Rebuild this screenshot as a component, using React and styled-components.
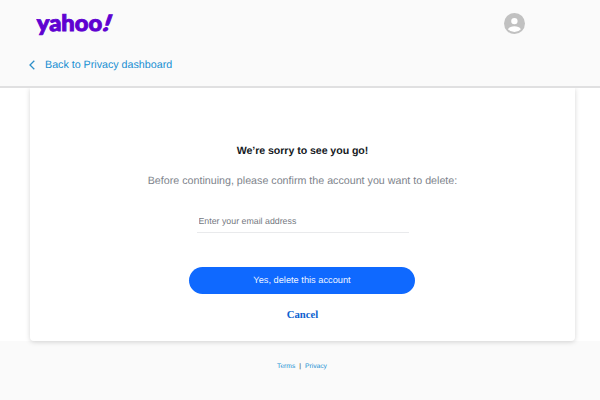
import React from "react";
import styled, { createGlobalStyle } from "styled-components";

const GlobalStyle = createGlobalStyle`
  * { box-sizing: border-box; }
  body {
    margin: 0;
    background: #fafafa;
    font-family: "Liberation Sans", Arial, sans-serif;
    text-rendering: geometricPrecision;
  }
`;

const Page = styled.div`
  display: flex;
  flex-direction: column;
  height: 400px;
  overflow: hidden;
`;

const Header = styled.header`
  height: 86px;
  flex: none;
`;

const TopBar = styled.div`
  display: flex;
  justify-content: space-between;
  align-items: center;
  height: 47px;
  padding: 0 75px 0 36px;
`;

const Logo = styled.svg`
  display: block;
  width: 84px;
  height: 44px;
  fill: #5f01d1;
  stroke: #5f01d1;
  stroke-width: 0.9;
  font-family: Lato, sans-serif;
  font-weight: 900;
`;

const Avatar = styled.svg`
  display: block;
  width: 21px;
  height: 21px;
`;

const BackLink = styled.a`
  display: flex;
  align-items: center;
  gap: 10px;
  height: 36px;
  padding-left: 29px;
  color: #188fd2;
  font-size: 10.7px;
  white-space: nowrap;
`;

const Chevron = styled.svg`
  display: block;
  width: 6px;
  height: 10px;
  fill: none;
  stroke: #2d8fc9;
  stroke-width: 1.3;
`;

const Main = styled.main`
  flex: none;
  height: 255px;
  padding: 0 25px 0 30px;
  background: #fff;
  border-top: 2px solid #e0e0e1;
`;

const Card = styled.section`
  display: flex;
  flex-direction: column;
  align-items: center;
  height: 253px;
  padding-top: 56px;
  background: #fff;
  border-radius: 0 0 4px 4px;
  box-shadow: 0 1px 5px rgba(0, 0, 0, 0.17);
  clip-path: inset(0 -8px -8px -8px);
`;

const Title = styled.h1`
  margin: 0;
  height: 14px;
  color: #15191e;
  font-size: 10.6px;
  letter-spacing: -0.05px;
  line-height: 14px;
`;

const Prompt = styled.p`
  margin: 16px 0 0;
  height: 15px;
  color: #7e848c;
  font-size: 10.7px;
  line-height: 15px;
  white-space: nowrap;
`;

const EmailInput = styled.input`
  width: 212px;
  height: 24px;
  margin-top: 20px;
  padding: 0 2px;
  border: 0;
  border-bottom: 1px solid #e9eaec;
  background: transparent;
  font: 8.8px "Liberation Sans", Arial, sans-serif;
  text-rendering: geometricPrecision;
  outline: none;
  &::placeholder {
    color: #75797f;
    opacity: 1;
  }
`;

const DeleteButton = styled.button`
  width: 226px;
  height: 27px;
  margin: 34px 1px 0 0;
  padding: 0 0 1px;
  border: 0;
  border-radius: 14px;
  background: #0f69ff;
  color: #eef4ff;
  font: 9.25px "Liberation Sans", Arial, sans-serif;
  text-rendering: geometricPrecision;
`;

const Cancel = styled.a`
  margin-top: 14px;
  color: #0c62d0;
  font: bold 10.7px/14px "Liberation Serif", "Times New Roman", serif;
`;

const Footer = styled.footer`
  display: flex;
  justify-content: center;
  gap: 4px;
  padding: 21px 0 0 4px;
  color: #333;
  font-size: 6.7px;
  line-height: 10px;
`;

const FooterLink = styled.a`
  color: #188fd2;
`;

export default function App() {
  return (
    <>
      <GlobalStyle />
      <Page>
        <Header>
          <TopBar>
            <Logo viewBox="0 0 84 44" aria-label="yahoo!">
              <text x="0.8" y="28.6" fontSize="22.5" textLength="65.5" lengthAdjust="spacingAndGlyphs">yahoo</text>
              <text transform="translate(65.300 28.600) skewX(-19) scale(1.150 1)" fontSize="22.5">!</text>
            </Logo>
            <Avatar viewBox="0 0 21 21">
              <circle cx="10.5" cy="10.5" r="10.5" fill="#c1c1c1" />
              <circle cx="10.4" cy="8.1" r="3.2" fill="#fff" />
              <path d="M4 16.2c1.2-2.3 3.6-3 6.4-3s5.3.7 6.5 3a8.6 8.6 0 0 1-12.9 0Z" fill="#fff" />
            </Avatar>
          </TopBar>
          <BackLink>
            <Chevron viewBox="0 0 6 10"><path d="M5.3.8 1 5l4.3 4.2" /></Chevron>
            Back to Privacy dashboard
          </BackLink>
        </Header>
        <Main>
          <Card>
            <Title>We’re sorry to see you go!</Title>
            <Prompt>Before continuing, please confirm the account you want to delete:</Prompt>
            <EmailInput placeholder="Enter your email address" />
            <DeleteButton>Yes, delete this account</DeleteButton>
            <Cancel>Cancel</Cancel>
          </Card>
        </Main>
        <Footer>
          <FooterLink>Terms</FooterLink>
          <span>|</span>
          <FooterLink>Privacy</FooterLink>
        </Footer>
      </Page>
    </>
  );
}
